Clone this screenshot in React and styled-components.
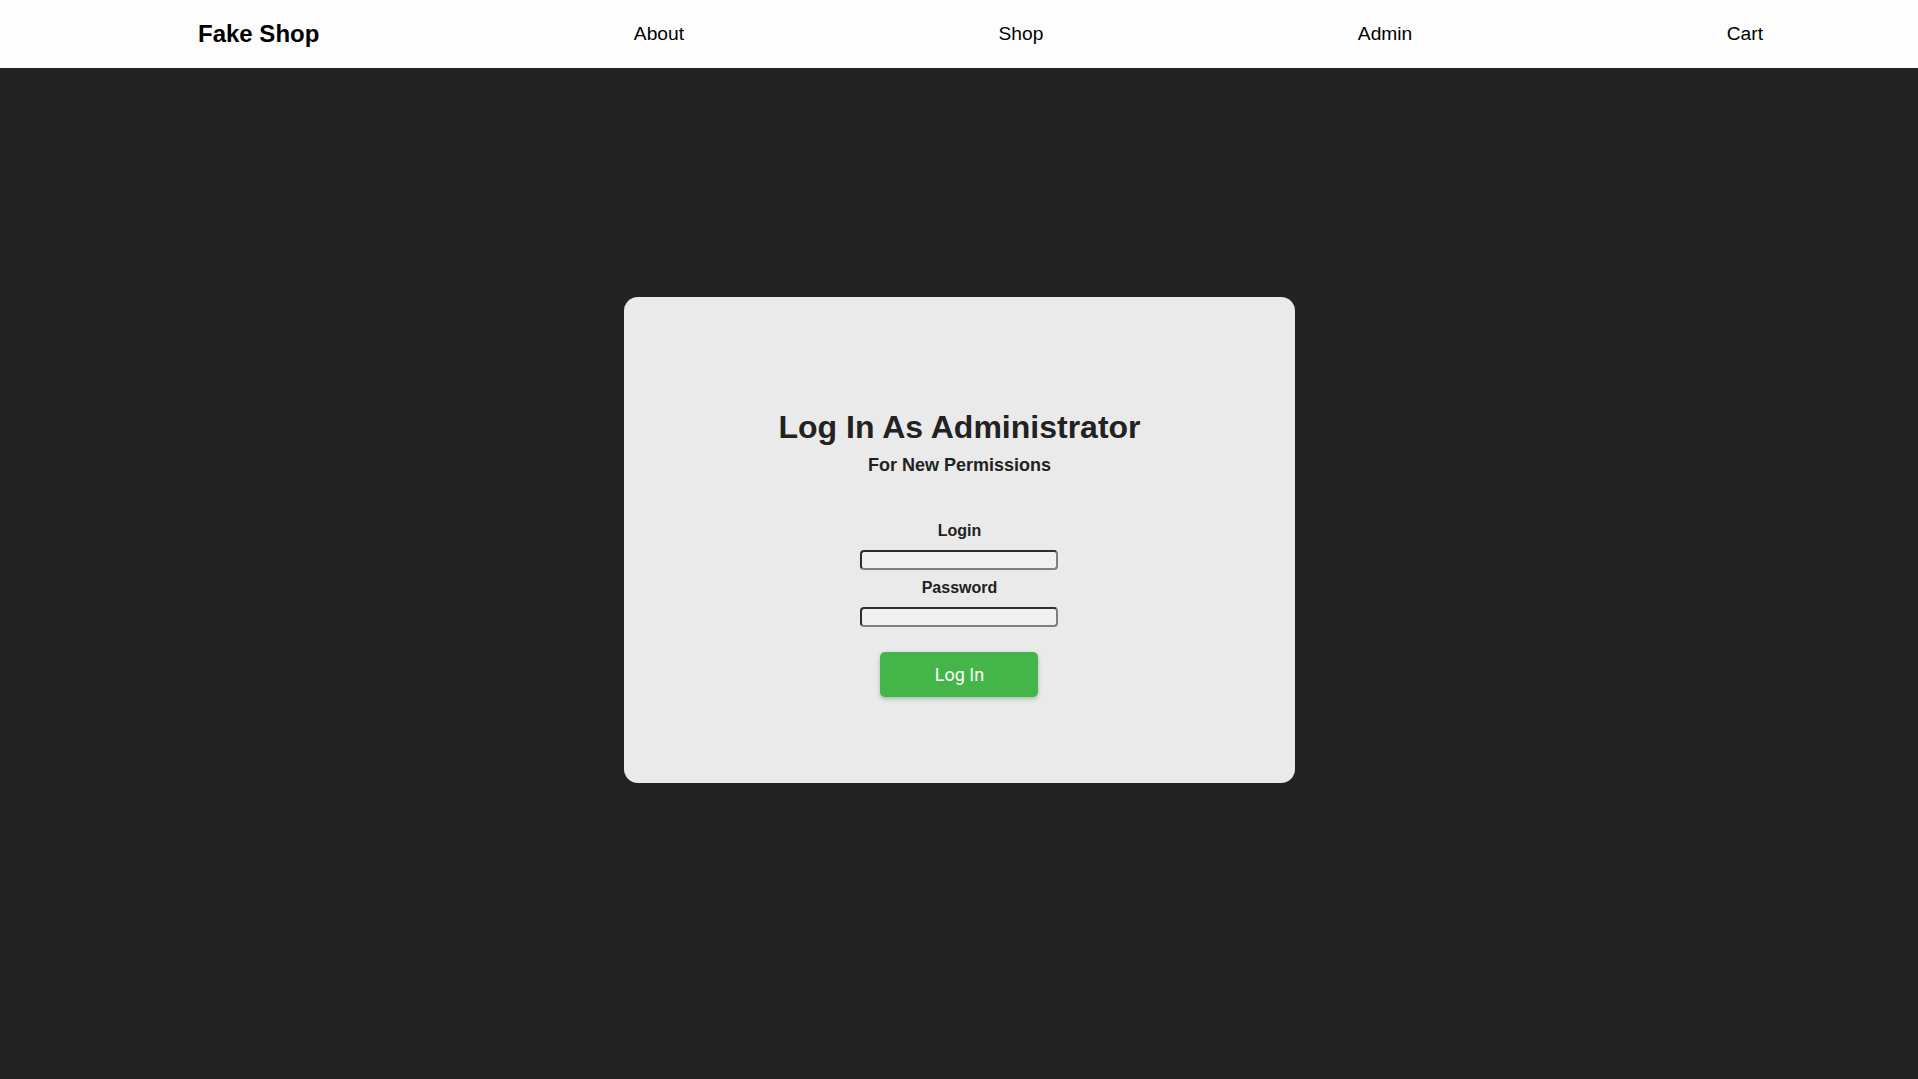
import React from "react";
import styled, { createGlobalStyle } from "styled-components";

// page level styles
const GlobalStyle = createGlobalStyle`
  html, body {
    margin: 0;
    padding: 0;
    background-color: #232323;
    font-family: "Liberation Sans", Arial, sans-serif;
  }
  * {
    box-sizing: border-box;
  }
`;

// top navigation bar
const NavBar = () => {
  return (
    <Nav>
      <Logo>Fake Shop</Logo>
      <NavLink>About</NavLink>
      <NavLink>Shop</NavLink>
      <NavLink>Admin</NavLink>
      <NavLink>Cart</NavLink>
    </Nav>
  );
};

// admin login form, controlled inputs
class AdminLogin extends React.Component {
  constructor(props) {
    super(props);
    this.state = {
      login: "",
      password: "",
    };
    this.handleChange = this.handleChange.bind(this);
    this.handleSubmit = this.handleSubmit.bind(this);
  }

  handleChange(event) {
    this.setState({
      [event.target.name]: event.target.value,
    });
  }

  handleSubmit(event) {
    event.preventDefault();
  }

  render() {
    return (
      <Card>
        <Title>Log In As Administrator</Title>
        <SubTitle>For New Permissions</SubTitle>
        <Form onSubmit={this.handleSubmit}>
          <Label htmlFor="login">Login</Label>
          <Field
            id="login"
            name="login"
            type="text"
            value={this.state.login}
            onChange={this.handleChange}
          />
          <Label htmlFor="password" $top={9}>
            Password
          </Label>
          <Field
            id="password"
            name="password"
            type="password"
            value={this.state.password}
            onChange={this.handleChange}
          />
          <LoginButton type="submit">Log In</LoginButton>
        </Form>
      </Card>
    );
  }
}

export default function App() {
  return (
    <>
      <GlobalStyle />
      <NavBar />
      <Main>
        <AdminLogin />
      </Main>
    </>
  );
}

// implement styles here
const Nav = styled.nav`
  height: 68px;
  background-color: #fdfdfd;
  display: flex;
  align-items: center;
  justify-content: space-between;
  padding: 0 155px 0 198px;
`;

const Logo = styled.span`
  font-size: 24px;
  font-weight: 700;
  color: #000;
`;

const NavLink = styled.a`
  font-size: 19.2px;
  color: #000;
  text-decoration: none;
  cursor: pointer;
`;

const Main = styled.main`
  display: flex;
  justify-content: center;
  padding-top: 229px;
  padding-left: 1px;
  min-height: calc(100vh - 68px);
`;

const Card = styled.div`
  width: 35vw;
  height: 45vh;
  background-color: #eaeaea;
  border-radius: 14px;
  display: flex;
  flex-direction: column;
  align-items: center;
  padding-top: 112px;
  color: #222;
`;

const Title = styled.h1`
  margin: 0;
  font-size: 32px;
  line-height: 37px;
  font-weight: 700;
`;

const SubTitle = styled.h3`
  margin: 9px 0 0;
  font-size: 18px;
  line-height: 21px;
  font-weight: 700;
`;

const Form = styled.form`
  display: flex;
  flex-direction: column;
  align-items: center;
  margin-top: 46px;
`;

const Label = styled.label`
  font-size: 16px;
  line-height: 18px;
  font-weight: 700;
  margin-top: ${(props) => props.$top || 0}px;
  margin-bottom: 10px;
`;

const Field = styled.input`
  width: 198px;
  height: 20px;
  background-color: #f0f0f0;
  border: 2px solid;
  border-color: #2e2e2e #808080 #808080 #2e2e2e;
  border-radius: 4px;
  padding: 0 4px;
  font-size: 13px;
  outline: none;
`;

const LoginButton = styled.button`
  margin-top: 25px;
  width: 158px;
  height: 45px;
  border: none;
  border-radius: 5px;
  background-color: #44b549;
  color: #fff;
  font-family: Roboto, "Liberation Sans", sans-serif;
  font-size: 18px;
  cursor: pointer;
  box-shadow: 0 2px 4px rgba(40, 110, 40, 0.35);
  &:hover {
    background-color: #3ca541;
  }
`;
